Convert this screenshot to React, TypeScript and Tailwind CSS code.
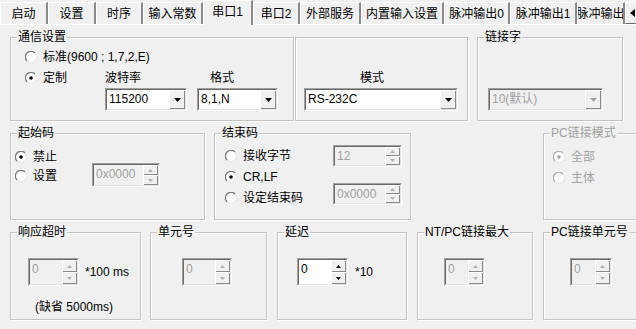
import type { ReactNode } from 'react'

// Windows-classic style "串口1" settings page. Everything is 12px text on the
// dialog grey; group boxes are etched frames with the caption laid over the line.

const tabs: [string, string][] = [
  ['启动', 'w-[48px]'],
  ['设置', 'w-[48px]'],
  ['时序', 'w-[47px]'],
  ['输入常数', 'w-[60px]'],
  ['串口1', 'w-[50px]'],
  ['串口2', 'w-[47px]'],
  ['外部服务', 'w-[61px]'],
  ['内置输入设置', 'w-[83px]'],
  ['脉冲输出0', 'w-[66px]'],
  ['脉冲输出1', 'w-[67px]'],
  ['脉冲输出', 'w-[48px]'],
]

function TabStrip() {
  return (
    <div className="flex h-[25px] shrink-0 items-end border-b border-white">
      {tabs.map(([label, w]) => {
        const on = label === '串口1'
        return (
          <div
            key={label}
            className={
              on
                ? `${w} relative -mb-px flex h-[25px] shrink-0 items-start justify-center overflow-hidden border-t border-l border-white border-r-2 border-r-[#8a8a8a] bg-[#f0f0f0] pt-[3px] leading-[16px]`
                : `${w} flex h-[22px] shrink-0 items-start justify-center overflow-hidden whitespace-nowrap border-t border-l border-white border-r-2 border-r-[#8a8a8a] pt-[3px] leading-[16px]`
            }
          >
            {label}
          </div>
        )
      })}
      <div className="flex h-[22px] w-[14px] shrink-0 items-center justify-center border border-t-white border-l-white border-r-[#696969] border-b-[#696969] bg-[#f0f0f0]">
        <svg width="5" height="8" viewBox="0 0 5 8">
          <path d="M5 0v8L0 4z" fill="#000" />
        </svg>
      </div>
    </div>
  )
}

function Group({ title, dim, className, children }: { title?: string; dim?: boolean; className: string; children?: ReactNode }) {
  return (
    <div
      className={`relative shrink-0 border border-[#c3c3c3] shadow-[inset_1px_1px_0_#fff,1px_1px_0_#fff] ${className}`}
    >
      {title ? (
        <span
          className={`absolute -top-[9px] left-[6px] bg-[#f0f0f0] px-[1px] leading-[16px] whitespace-nowrap ${dim ? 'text-[#a0a0a0]' : 'text-black'}`}
        >
          {title}
        </span>
      ) : null}
      {children}
    </div>
  )
}

function Radio({ label, checked, dim, className = '' }: { label: string; checked?: boolean; dim?: boolean; className?: string }) {
  return (
    <div className={`flex h-[16px] items-center gap-[6px] whitespace-nowrap ${dim ? 'text-[#a0a0a0]' : ''} ${className}`}>
      <svg width="12" height="12" viewBox="0 0 12 12" className="shrink-0">
        <circle cx="6" cy="6" r="5" fill="#fff" />
        <path d="M2 10 A5.6 5.6 0 0 1 10 2" stroke={dim ? '#b0b0b0' : '#7a7a7a'} strokeWidth="1.3" fill="none" />
        <path d="M10 2 A5.6 5.6 0 0 1 2 10" stroke="#e6e6e6" strokeWidth="1" fill="none" />
        {checked ? <circle cx="6" cy="6" r="1.8" fill={dim ? '#a0a0a0' : '#000'} /> : null}
      </svg>
      <span className="leading-[16px]">{label}</span>
    </div>
  )
}

function Combo({ value, dim, className }: { value: string; dim?: boolean; className: string }) {
  return (
    <div className={`flex h-[23px] border border-t-[#a0a0a0] border-l-[#a0a0a0] border-r-white border-b-white ${className}`}>
      <div
        className={`flex flex-1 border border-t-[#696969] border-l-[#696969] border-r-[#e3e3e3] border-b-[#e3e3e3] ${dim ? 'bg-[#f0f0f0] text-[#a0a0a0]' : 'bg-white'}`}
      >
        <span className="flex-1 pl-[2px] leading-[19px] whitespace-nowrap">{value}</span>
        <div className="flex w-[16px] items-center justify-center bg-[#f0f0f0] shadow-[inset_1px_1px_0_#fff,inset_-1px_-1px_0_#8a8a8a]">
          <svg width="7" height="4" viewBox="0 0 7 4">
            <path d="M0 0h7L3.5 4z" fill={dim ? '#a0a0a0' : '#000'} />
          </svg>
        </div>
      </div>
    </div>
  )
}

function Spin({ value, dim = true, className }: { value: string; dim?: boolean; className: string }) {
  const arrow = dim ? '#b0b0b0' : '#000'
  return (
    <div className={`flex shrink-0 border border-t-[#a0a0a0] border-l-[#a0a0a0] border-r-white border-b-white ${className}`}>
      <div
        className={`flex flex-1 border border-t-[#696969] border-l-[#696969] border-r-[#e3e3e3] border-b-[#e3e3e3] ${dim ? 'bg-[#f0f0f0] text-[#a0a0a0]' : 'bg-white'}`}
      >
        <span className="flex-1 pl-[2px] pt-[1px] leading-[16px]">{value}</span>
        <div className="flex w-[15px] flex-col">
          <div className="flex flex-1 items-center justify-center bg-[#f0f0f0] shadow-[inset_1px_1px_0_#fff,inset_-1px_-1px_0_#8a8a8a]">
            <svg width="5" height="3" viewBox="0 0 5 3">
              <path d="M0 3h5L2.5 0z" fill={arrow} />
            </svg>
          </div>
          <div className="flex flex-1 items-center justify-center bg-[#f0f0f0] shadow-[inset_1px_1px_0_#fff,inset_-1px_-1px_0_#8a8a8a]">
            <svg width="5" height="3" viewBox="0 0 5 3">
              <path d="M0 0h5L2.5 3z" fill={arrow} />
            </svg>
          </div>
        </div>
      </div>
    </div>
  )
}

export default function App() {
  return (
    <div className="flex h-[329px] w-[636px] flex-col overflow-hidden bg-[#f0f0f0] text-[12px] text-black [font-family:'Liberation_Sans','Noto_Sans_CJK_SC',sans-serif]">
      <TabStrip />

      {/* row 1: 通信设置 / 模式 / 链接字 */}
      <div className="mt-[12px] flex h-[84px] shrink-0 pl-[10px]">
        <Group title="通信设置" className="w-[284px]">
          <div className="flex flex-col pl-[14px] pt-[11px]">
            <Radio label="标准(9600 ; 1,7,2,E)" />
            <div className="mt-[5px] flex items-start">
              <Radio label="定制" checked className="w-[80px]" />
              <div className="flex flex-col">
                <span className="leading-[16px]">波特率</span>
                <Combo value="115200" className="mt-[2px] w-[82px]" />
              </div>
              <div className="ml-[10px] flex flex-col">
                <span className="pl-[13px] leading-[16px]">格式</span>
                <Combo value="8,1,N" className="mt-[2px] w-[81px]" />
              </div>
            </div>
          </div>
        </Group>
        <Group className="ml-[1px] w-[173px]">
          <div className="flex flex-col pl-[8px] pt-[32px]">
            <span className="pl-[56px] leading-[16px]">模式</span>
            <Combo value="RS-232C" className="mt-[2px] w-[154px]" />
          </div>
        </Group>
        <Group title="链接字" className="ml-[9px] w-[146px]">
          <div className="pl-[10px] pt-[50px]">
            <Combo value="10(默认)" dim className="w-[115px]" />
          </div>
        </Group>
      </div>

      {/* row 2: 起始码 / 结束码 / PC链接模式 */}
      <div className="mt-[12px] flex h-[87px] shrink-0 pl-[10px]">
        <Group title="起始码" className="w-[195px]">
          <div className="flex flex-col pl-[4px] pt-[15px]">
            <Radio label="禁止" checked />
            <div className="flex items-center">
              <Radio label="设置" className="w-[77px]" />
              <Spin value="0x0000" className="-mt-[2px] h-[24px] w-[68px]" />
            </div>
          </div>
        </Group>
        <Group title="结束码" className="ml-[9px] w-[197px]">
          <div className="flex flex-col pl-[10px] pt-[11px]">
            <div className="flex items-center">
              <Radio label="接收字节" className="w-[108px]" />
              <Spin value="12" className="h-[22px] w-[69px]" />
            </div>
            <Radio label="CR,LF" checked className="mt-[2px]" />
            <div className="-mt-[2px] flex items-start">
              <Radio label="设定结束码" className="mt-[7px] w-[108px]" />
              <Spin value="0x0000" className="h-[22px] w-[69px]" />
            </div>
          </div>
        </Group>
        <Group title="PC链接模式" dim className="ml-[132px] w-[120px]">
          <div className="flex flex-col gap-[5px] pl-[9px] pt-[15px]">
            <Radio label="全部" checked dim />
            <Radio label="主体" dim />
          </div>
        </Group>
      </div>

      {/* row 3: numeric settings */}
      <div className="mt-[12px] flex h-[88px] shrink-0 pl-[10px]">
        <Group title="响应超时" className="w-[131px]">
          <div className="flex flex-col pt-[25px]">
            <div className="flex items-center pl-[17px]">
              <Spin value="0" className="h-[28px] w-[51px]" />
              <span className="ml-[6px] leading-[16px]">*100 ms</span>
            </div>
            <span className="mt-[13px] pl-[24px] leading-[16px]">(缺省 5000ms)</span>
          </div>
        </Group>
        <Group title="单元号" className="ml-[9px] w-[117px]">
          <div className="pl-[31px] pt-[25px]">
            <Spin value="0" className="h-[28px] w-[50px]" />
          </div>
        </Group>
        <Group title="延迟" className="ml-[10px] w-[130px]">
          <div className="flex items-center pl-[19px] pt-[25px]">
            <Spin value="0" dim={false} className="h-[28px] w-[51px]" />
            <span className="ml-[7px] leading-[16px]">*10</span>
          </div>
        </Group>
        <Group title="NT/PC链接最大" className="ml-[10px] w-[116px]">
          <div className="pl-[26px] pt-[25px]">
            <Spin value="0" className="h-[28px] w-[41px]" />
          </div>
        </Group>
        <Group title="PC链接单元号" className="ml-[10px] w-[120px]">
          <div className="pl-[26px] pt-[25px]">
            <Spin value="0" className="h-[28px] w-[42px]" />
          </div>
        </Group>
      </div>
    </div>
  )
}
